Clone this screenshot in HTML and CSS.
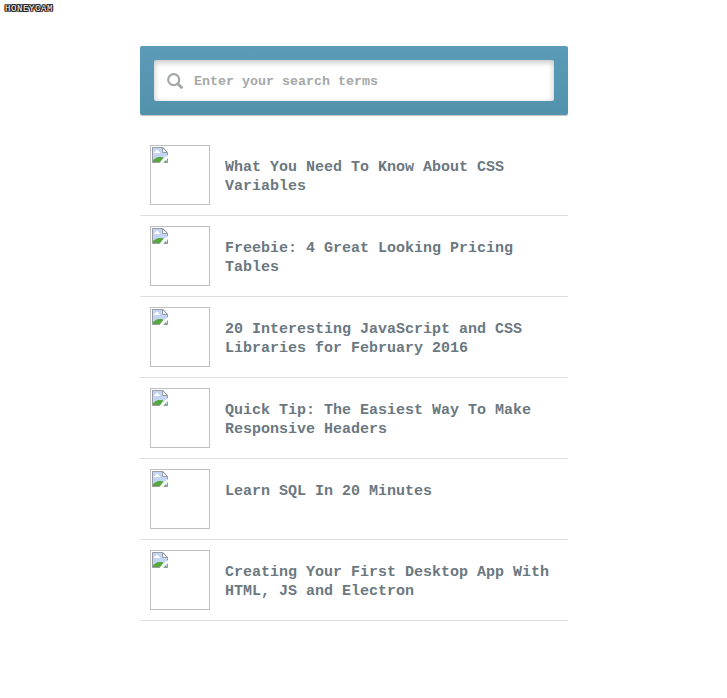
FILE: index.html
```
<!DOCTYPE html>
<html lang="en">
<head>
<meta charset="utf-8">
<title>Search</title>
<link rel="stylesheet" href="styles.css">
</head>
<body>
<svg class="defs" aria-hidden="true">
  <symbol id="broken" viewBox="0 0 16 16">
    <path d="M0 0h11l5 5v11H0z" fill="#c3d5f5"/>
    <path d="M2 6V5h1V4h1V3h2v1h1v1h1v1z" fill="#fff"/>
    <path d="M1 15v-2l3-2 2-1h4l3 2 2 3z" fill="#57a83f"/>
    <path d="M.5 15.500V.5h10.200l4.800 4.800v10.200z" fill="none" stroke="#999ca1"/>
    <path d="M10.500.5v5h5z" fill="#f4f4f4" stroke="#999ca1"/>
    <path d="M16 8v3l-5 5H7.500l3-4 3-2z" fill="#fff"/>
  </symbol>
</svg>
<div class="watermark">HONEYCAM</div>
<main class="panel">
  <form class="search">
    <label class="field">
      <svg class="lens" viewBox="0 0 17 17"><circle cx="6.700" cy="6.700" r="5.500"/><path d="M10.800 10.800l4.500 4.500"/></svg>
      <input type="text" placeholder="Enter your search terms">
    </label>
  </form>
  <ul class="results">
    <li><span class="thumb"><svg><use href="#broken"/></svg></span><h2>What You Need To Know About CSS Variables</h2></li>
    <li><span class="thumb"><svg><use href="#broken"/></svg></span><h2>Freebie: 4 Great Looking Pricing Tables</h2></li>
    <li><span class="thumb"><svg><use href="#broken"/></svg></span><h2>20 Interesting JavaScript and CSS Libraries for February 2016</h2></li>
    <li><span class="thumb"><svg><use href="#broken"/></svg></span><h2>Quick Tip: The Easiest Way To Make Responsive Headers</h2></li>
    <li><span class="thumb"><svg><use href="#broken"/></svg></span><h2>Learn SQL In 20 Minutes</h2></li>
    <li><span class="thumb"><svg><use href="#broken"/></svg></span><h2>Creating Your First Desktop App With HTML, JS and Electron</h2></li>
  </ul>
</main>
</body>
</html>
```
FILE: styles.css
```
* { box-sizing: border-box; }
body {
  margin: 0;
  background: #fff;
  font-family: "Liberation Mono", monospace;
  font-weight: bold;
}
.defs { position: absolute; width: 0; height: 0; }
.watermark {
  position: absolute;
  left: 5px;
  top: 5px;
  font-size: 9px;
  font-weight: normal;
  line-height: 9px;
  letter-spacing: .6px;
  color: #fff;
  text-shadow: -1px 0 #222, 1px 0 #222, 0 -1px #222, 0 1px #222, 1px 1px #222, -1px -1px #222, 1px -1px #222, -1px 1px #222;
}
.panel { width: 428px; margin: 0 0 0 140px; padding-top: 46px; }
.search {
  height: 69px;
  padding: 14px;
  border-radius: 2px;
  background: linear-gradient(#5c9bb7, #5392ad);
  box-shadow: 0 1px 1px rgba(0, 0, 0, .25);
}
.field {
  display: flex;
  align-items: center;
  height: 41px;
  padding: 2px 0 0 13px;
  border-radius: 2px;
  background: #fff;
  box-shadow: inset 0 2px 6px rgba(0, 0, 0, .25);
}
.lens { width: 17px; height: 17px; margin-right: 10px; fill: none; stroke: #a5a8a8; stroke-width: 2.2; }
.lens path { stroke-width: 3; }
input {
  flex: 1;
  min-width: 0;
  padding: 0;
  border: 0;
  outline: 0;
  background: none;
  font: bold 13.333px "Liberation Mono", monospace;
}
input::placeholder { color: #a5a8a8; opacity: 1; }
.results { margin: 20px 0 0; padding: 0; list-style: none; }
.results li {
  display: flex;
  height: 81px;
  padding: 10px 0 10px 10px;
  border-bottom: 1px solid #ddd;
}
.thumb {
  flex: none;
  width: 60px;
  height: 60px;
  padding: 1px;
  border: 1px solid #c0c0c0;
}
.thumb svg { display: block; width: 16px; height: 16px; }
h2 {
  width: 330px;
  margin: 13px 0 0 15px;
  font-size: 15px;
  line-height: 19px;
  color: #6b7880;
}
```
